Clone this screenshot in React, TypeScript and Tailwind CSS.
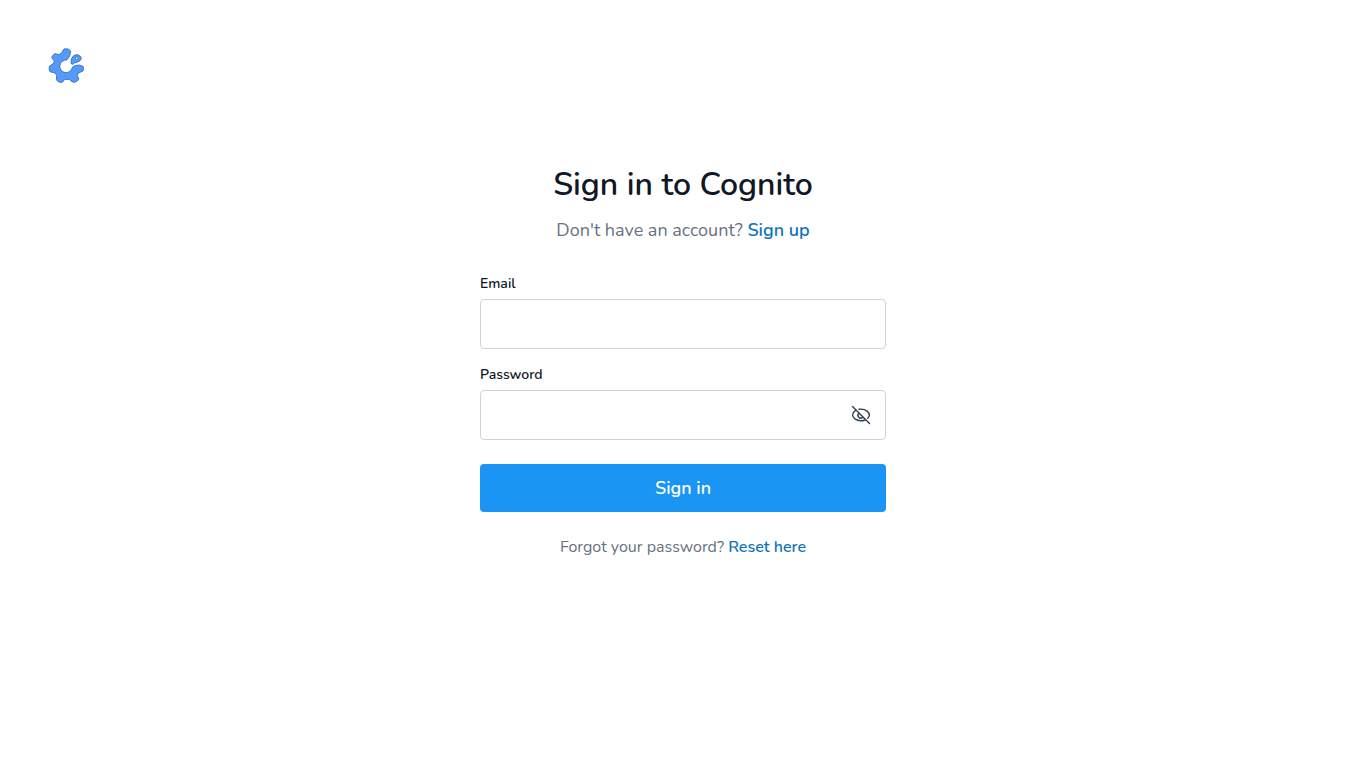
import { useState } from "react";

const Logo = () => (
  <svg className="size-11" viewBox="0 0 132 132" aria-hidden="true">
    <g fill="#569af8" stroke="#3d72cb" strokeWidth="3" strokeLinejoin="round">
      <path d="M60 15 Q67 13 75 16 L80 22 L77 36 L68 48 A19 19 0 1 0 85 70 L91 66 L105 63 L117 67 Q120 74 117 81 L103 87 L100 94 L104 105 Q101 112 92 115 L83 113 L76 106 L62 106 L56 114 Q49 117 41 112 L37 106 L38 94 L33 87 L18 83 Q14 76 16 67 L29 58 L31 51 L23 41 Q25 34 32 29 L45 32 L53 27 Z" />
      <path d="M81 57 Q80 44 88 36 Q95 30 103 33 Q112 37 112 43 Q110 52 101 54 Q92 55 86 61 Q82 61 81 57 Z" />
      <circle cx="98" cy="43" r="4" fill="#fff" />
    </g>
  </svg>
);

const EyeOff = () => (
  <svg
    className="size-6"
    viewBox="0 0 24 24"
    fill="none"
    stroke="currentColor"
    strokeWidth="1.4"
    strokeLinecap="round"
    aria-hidden="true"
  >
    <path d="M3.5 3.5l17 17" />
    <path d="M6.3 7.6C4.3 8.9 3.6 10.7 3.6 12c0 2.500 3.400 5.800 8.400 5.800 1.500 0 2.900-.3 4.100-.8" />
    <path d="M10 6.300c.6-.1 1.300-.2 2-.2 5 0 8.400 3.400 8.400 5.900 0 1-.6 2.200-1.600 3.200" />
    <path d="M9.800 10.200a2.800 2.800 0 0 0 4 4" />
  </svg>
);

const linkClass = "font-semibold text-[#0f75bc] hover:underline";
const inputClass =
  "h-[50px] w-full rounded border border-[#d1d3d7] bg-white px-4 text-base outline-none focus:border-[#1b95f3]";

export default function App() {
  const [showPassword, setShowPassword] = useState(false);

  return (
    <div className="min-h-screen bg-white font-['Nunito','Lato',sans-serif] text-[#101828]">
      <header className="px-11 pt-11">
        <a href="#" aria-label="Cognito" className="block w-fit">
          <Logo />
        </a>
      </header>

      <main className="mx-auto w-full max-w-[406px] pt-[77px]">
        <h1 className="text-center text-[32px] leading-10 font-semibold">Sign in to Cognito</h1>
        <p className="mt-[11px] text-center text-lg leading-7 text-[#677283]">
          Don't have an account?{" "}
          <a href="#signup" className={linkClass}>
            Sign up
          </a>
        </p>

        <form className="mt-[30px]" onSubmit={(e) => e.preventDefault()}>
          <label htmlFor="email" className="mb-[5px] block text-sm leading-5 font-semibold">
            Email
          </label>
          <input id="email" type="email" className={inputClass} />

          <label htmlFor="password" className="mt-4 mb-[5px] block text-sm leading-5 font-semibold">
            Password
          </label>
          <div className="relative">
            <input id="password" type={showPassword ? "text" : "password"} className={inputClass} />
            <button
              type="button"
              aria-label="Show password"
              className="absolute inset-y-0 right-[13px] text-[#334155]"
              onClick={() => setShowPassword(!showPassword)}
            >
              <EyeOff />
            </button>
          </div>

          <button
            type="submit"
            className="mt-6 h-12 w-full rounded bg-[#1b95f3] text-lg font-semibold text-white hover:bg-[#0f85e0]"
          >
            Sign in
          </button>
        </form>

        <p className="mt-[23px] text-center text-base leading-6 text-[#677283]">
          Forgot your password?{" "}
          <a href="#reset" className={linkClass}>
            Reset here
          </a>
        </p>
      </main>
    </div>
  );
}
